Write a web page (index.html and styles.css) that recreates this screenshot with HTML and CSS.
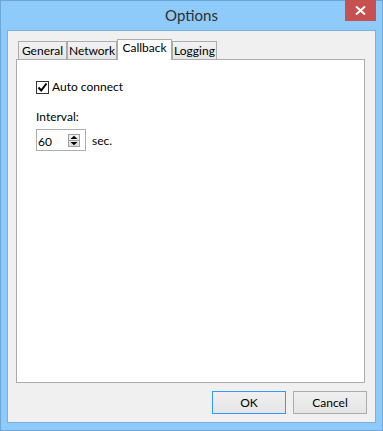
FILE: index.html
```
<!DOCTYPE html>
<html>
<head>
<meta charset="utf-8">
<link rel="stylesheet" href="styles.css">
</head>
<body>
<div class="window">
  <div class="titlebar">
    <span class="title">Options</span>
    <div class="close">
      <svg width="11" height="9" viewBox="0 0 11 9"><path d="M1 0.5 L10 8.5 M10 0.5 L1 8.5" stroke="#fff" stroke-width="2"/></svg>
    </div>
  </div>
  <div class="client">
    <div class="tabs">
      <div class="tabstrip">
        <div class="tab t-general">General</div>
        <div class="tab t-network">Network</div>
        <div class="tab t-callback selected">Callback</div>
        <div class="tab t-logging">Logging</div>
      </div>
      <div class="panel">
        <label class="check-row">
          <span class="checkbox">
            <svg width="11" height="11" viewBox="0 0 11 11"><path d="M1.5 5.5 L4.2 8.5 L9.5 1.5" stroke="#000" stroke-width="2" fill="none"/></svg>
          </span>
          <span>Auto connect</span>
        </label>
        <div class="label">Interval:</div>
        <div class="spin-row">
          <div class="spinbox">
            <span class="value">60</span>
            <span class="spinbtn">
              <svg width="12" height="13" viewBox="0 0 12 13">
                <defs><linearGradient id="g" x1="0" y1="0" x2="0" y2="1"><stop offset="0" stop-color="#f4f4f4"/><stop offset="1" stop-color="#dcdcdc"/></linearGradient></defs>
                <rect x="0.5" y="0.5" width="11" height="12" fill="url(#g)" stroke="#a0a0a0"/>
                <line x1="0.5" y1="6.5" x2="11.5" y2="6.5" stroke="#a0a0a0"/>
                <path d="M2.5 5 L6 1.8 L9.5 5 Z" fill="#000"/>
                <path d="M2.5 8 L6 11.2 L9.5 8 Z" fill="#000"/>
              </svg>
            </span>
          </div>
          <span class="unit">sec.</span>
        </div>
      </div>
    </div>
    <div class="buttons">
      <div class="btn default">OK</div>
      <div class="btn">Cancel</div>
    </div>
  </div>
</div>
</body>
</html>
```
FILE: styles.css
```
* { box-sizing: border-box; }
html, body { margin: 0; padding: 0; }
body {
  width: 383px;
  height: 431px;
  font-family: "Segoe UI", Lato, "Liberation Sans", sans-serif;
  font-size: 12px;
  color: #000;
}
.window {
  position: relative;
  width: 383px;
  height: 431px;
  background: #8ecafa;
  border: 1px solid #6fa6d8;
  display: flex;
  flex-direction: column;
}
.titlebar {
  position: relative;
  height: 29px;
  display: flex;
  justify-content: center;
  padding-top: 4px;
}
.title {
  font-size: 15px;
  line-height: 20px;
  color: #2f2f2f;
}
.close {
  position: absolute;
  top: -1px;
  right: 6px;
  width: 31px;
  height: 21px;
  background: #c75050;
  display: flex;
  align-items: center;
  justify-content: center;
}
.client {
  flex: 1;
  margin: 0 6px 7px 6px;
  border: 1px solid #78b0e2;
  background: #f0f0f0;
  display: flex;
  flex-direction: column;
}
.tabs {
  flex: 1;
  display: flex;
  flex-direction: column;
  padding: 8px 10px 0 8px;
}
.tabstrip {
  height: 20px;
  display: flex;
  align-items: flex-end;
  padding-left: 2px;
  position: relative;
  z-index: 1;
}
.tab {
  height: 18px;
  border: 1px solid #acacac;
  border-bottom: none;
  background: linear-gradient(#f2f2f2, #e6e6e6);
  text-align: center;
  line-height: 16px;
  padding-top: 1px;
}
.t-general { width: 49px; }
.t-network { width: 50px; }
.t-callback { width: 55px; }
.t-logging { width: 45px; }
.tab.selected {
  height: 21px;
  margin-bottom: -1px;
  background: #fff;
  line-height: 16px;
  padding-top: 0;
}
.panel {
  flex: 1;
  border: 1px solid #acacac;
  background: #fff;
  padding: 19px 0 0 19px;
  display: flex;
  flex-direction: column;
  align-items: flex-start;
}
.check-row {
  display: flex;
  align-items: center;
  height: 16px;
  line-height: 16px;
  gap: 3px;
}
.checkbox {
  width: 13px;
  height: 13px;
  border: 1px solid #333;
  background: #fff;
  display: flex;
  align-items: center;
  justify-content: center;
}
.label {
  margin-top: 14px;
  line-height: 16px;
}
.spin-row {
  margin-top: 4px;
  display: flex;
  align-items: center;
  gap: 6px;
}
.spinbox {
  width: 50px;
  height: 22px;
  border: 1px solid #abadb3;
  background: #fff;
  display: flex;
  align-items: center;
  justify-content: space-between;
  padding: 0 5px 0 1px;
}
.value {
  line-height: 16px;
  padding-top: 3px;
}
.spinbtn {
  display: flex;
  margin-top: 1px;
}
.unit {
  line-height: 16px;
  padding-top: 2px;
}
.buttons {
  display: flex;
  justify-content: flex-end;
  gap: 7px;
  padding: 8px 8px 8px 8px;
}
.btn {
  width: 74px;
  height: 23px;
  border: 1px solid #acacac;
  background: linear-gradient(#f0f0f0, #e5e5e5);
  text-align: center;
  line-height: 21px;
}
.btn.default {
  border-color: #3399ff;
}
```
